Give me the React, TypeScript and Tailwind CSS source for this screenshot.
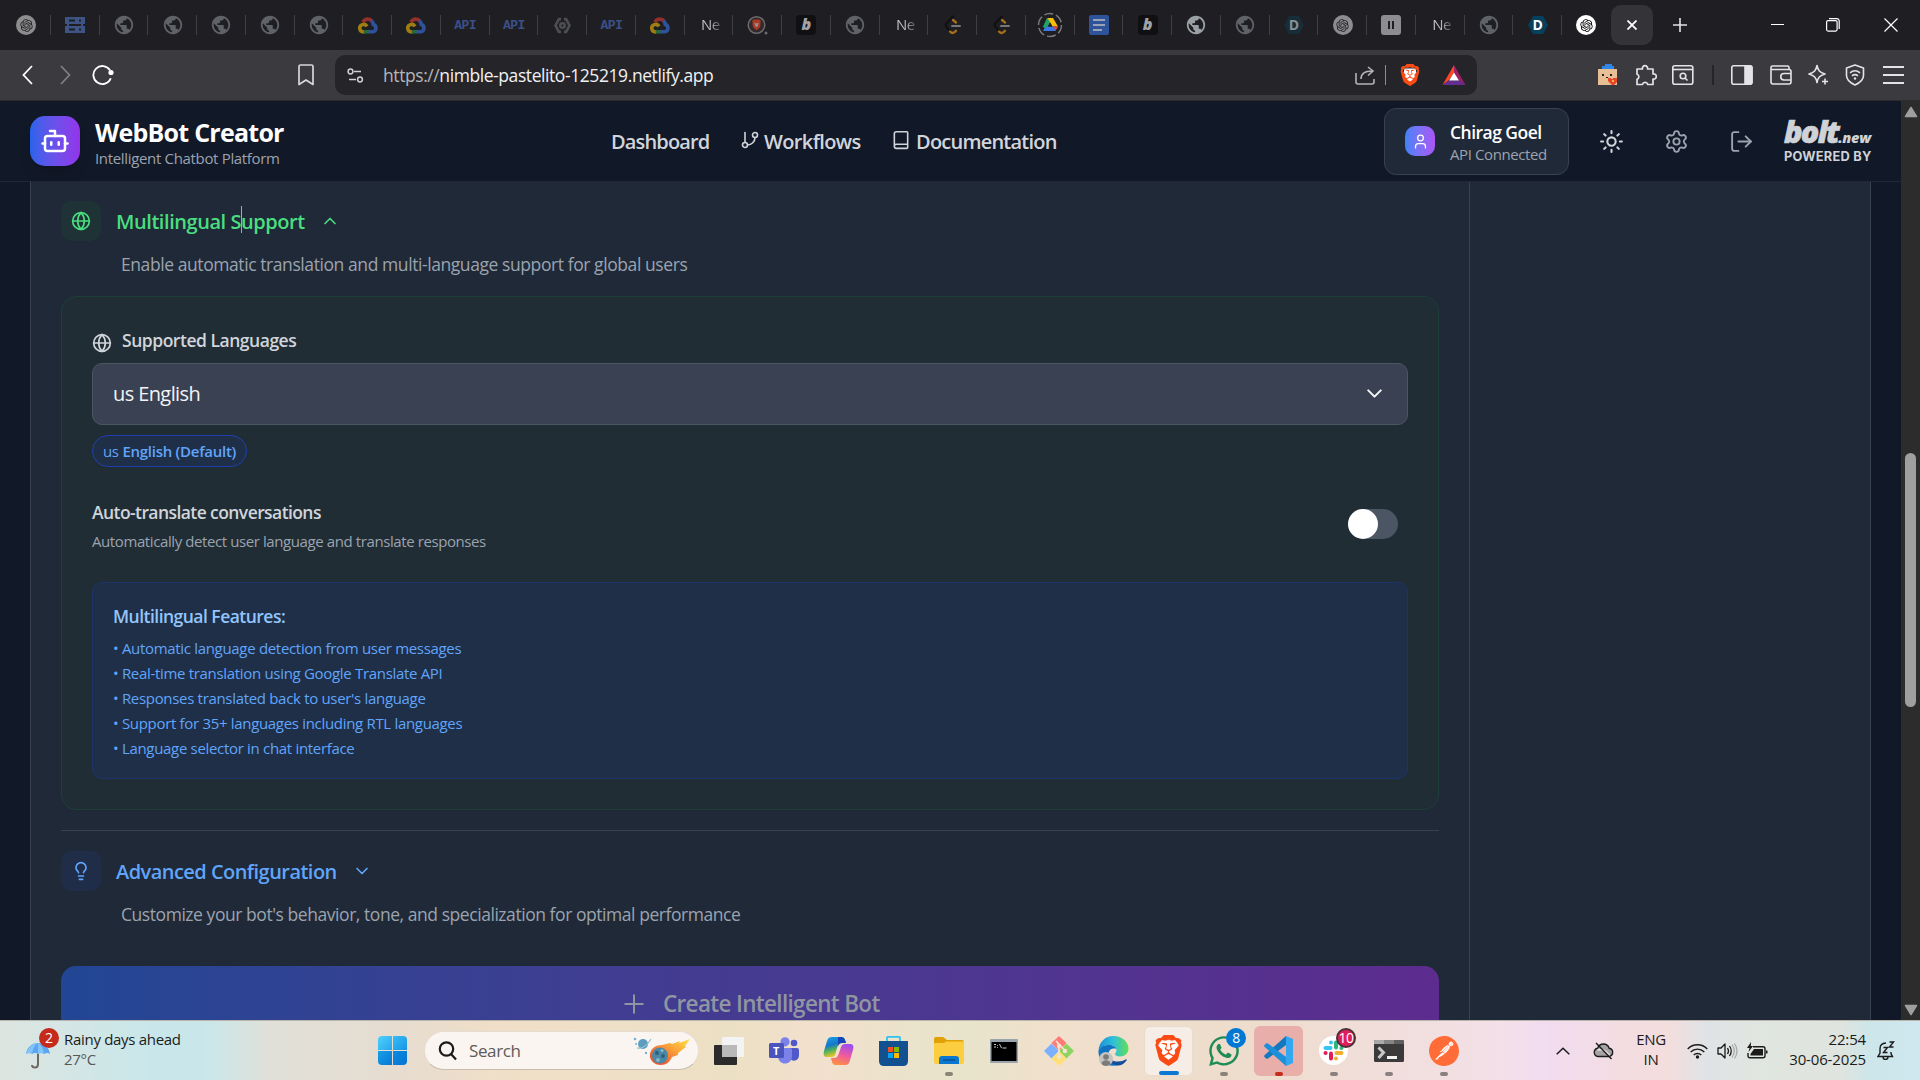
import type { ReactNode } from "react";
import {
  Book,
  Bot,
  ChevronDown,
  ChevronUp,
  GitBranch,
  Globe,
  Lightbulb,
  LogOut,
  Plus,
  Settings,
  Sun,
  User,
} from "lucide-react";
import { FaWhatsapp } from "react-icons/fa";
import { MdPublic } from "react-icons/md";
import { RiOpenaiFill } from "react-icons/ri";
import { SiBrave, SiPostman } from "react-icons/si";

/* ---------- favicons ---------- */

function GptIcon({ bright = false }: { bright?: boolean }) {
  return (
    <span className={`flex size-5 items-center justify-center rounded-full ${bright ? "bg-white text-black" : "bg-[#8d8d8f] text-[#1f1f23]"}`}>
      <RiOpenaiFill size={15} />
    </span>
  );
}

function GlobeIcon({ bright = false }: { bright?: boolean }) {
  return <MdPublic size={22} className={bright ? "text-[#9aa0a6]" : "text-[#5f6367]"} />;
}

function ServerIcon() {
  return (
    <svg width="20" height="18" viewBox="0 0 20 18">
      <path d="M0 1h20v7H0zM0 10h20v7H0z" fill="#3d5484" />
      <path d="M4 3.500h6v2H4zM14 3.500h2v2h-2zM4 12.500h6v2H4zM14 12.500h2v2h-2z" fill="#1f1f23" />
      <path d="M2 8h2v2H2zM16 8h2v2h-2z" fill="#3d5484" />
    </svg>
  );
}

function CloudIcon() {
  return (
    <svg width="20" height="17" viewBox="0 0 20 17" fill="none" strokeWidth="3.600">
      <path d="M5 5.200A5.200 5.200 0 0 1 14 4.300" stroke="#94302b" />
      <path d="M13.300 3.600C15 5 15.200 6.300 15.300 7.500A3.800 3.800 0 0 1 15 14.800H10" stroke="#2e529c" />
      <path d="M10.500 14.800H5.200" stroke="#276a38" />
      <path d="M5.800 14.800A3.700 3.700 0 1 1 8.800 9.500" stroke="#a07d12" />
    </svg>
  );
}

function ApiIcon() {
  return <span className="font-['Liberation_Mono',monospace] text-[13px] leading-none font-bold tracking-[-0.5px] text-[#3b4f88]">API</span>;
}

function HexIcon() {
  return (
    <svg width="17" height="17" viewBox="0 0 18 18" fill="none" stroke="#4d4e51">
      <path d="M7.500 2.200H5.200L1.600 9l3.600 6.800h2.300M10.500 2.200h2.300L16.400 9l-3.600 6.800h-2.300" strokeWidth="2.800" />
      <circle cx="9" cy="9" r="2.400" strokeWidth="2.600" />
    </svg>
  );
}

function NewTabText() {
  return (
    <span className="mb-0.5 bg-gradient-to-r from-[#c8c8ca] from-50% to-[#5a5a5e] bg-clip-text pl-[3px] text-[15px] leading-[22px] tracking-[-0.03em] text-transparent">
      Ne
    </span>
  );
}

function BraveTalkIcon() {
  return (
    <svg width="21" height="21" viewBox="0 0 21 21">
      <circle cx="9.500" cy="10" r="8.300" fill="#33282a" stroke="#6b6b6e" strokeWidth="1.500" />
      <path d="M5.300 5.500 7 4.500h5l1.700 1-.5 6.500L9.500 15.500 5.800 12z" fill="#a83a24" />
      <path d="m7.300 7.500 2.200 1 2.200-1-.8 3.500-1.400 1.200L8.100 11z" fill="#9c8a88" />
      <circle cx="19" cy="18" r="1.500" fill="#6b6b6e" />
    </svg>
  );
}

function BoltIcon() {
  return (
    <span className="flex size-5 items-center justify-center rounded bg-[#101012] pb-0.5 text-[16px] leading-none font-extrabold text-[#a3a3a5] italic">
      b
    </span>
  );
}

function LeetIcon() {
  return (
    <svg width="17" height="20" viewBox="0 0 17 20" fill="none" strokeWidth="2.300" strokeLinecap="round">
      <path d="M9 1.500 2.500 8.200a3 3 0 0 0 0 3.800L6 15.700" stroke="#111113" />
      <path d="M9 5l3 2.500M6 16.500c2 2.300 4 1.800 6-.7" stroke="#a66f1a" />
      <path d="M8 11h8" stroke="#77777a" strokeWidth="2" />
    </svg>
  );
}

function DriveIcon() {
  return (
    <svg width="26" height="26" viewBox="0 0 26 26">
      <circle cx="13" cy="13" r="11.500" fill="none" stroke="#7a7a7e" strokeWidth="1.500" strokeDasharray="9 3" />
      <path d="M10 6h6l-7 12-3-3.500z" fill="#1ea362" />
      <path d="M10.500 6H16l5 8.500h-5.500z" fill="#fbbc04" />
      <path d="M8.500 14.500H21L18 19H6z" fill="#3b78e7" />
      <path d="M16.500 14.500H21L18.500 19z" fill="#ea4335" />
      <path d="M13 10.500l2.300 4h-4.600z" fill="#1f1f23" />
    </svg>
  );
}

function DocsIcon() {
  return (
    <svg width="20" height="20" viewBox="0 0 20 20">
      <rect width="20" height="20" rx="2" fill="#2f539a" />
      <path d="M4 5h12M4 10h12M4 15h9" stroke="#9aa3b5" strokeWidth="2.200" />
    </svg>
  );
}

function DevIcon({ bright = false }: { bright?: boolean }) {
  return (
    <span className="relative flex h-5 w-5 items-center justify-center">
      <svg className="absolute inset-0" width="20" height="20" viewBox="0 0 20 20">
        <path d="M5 1h10l5 9-5 9H5l-5-9z" fill={bright ? "#05405c" : "#162d3a"} />
      </svg>
      <span className={`relative text-[14px] leading-none font-bold ${bright ? "text-white" : "text-[#8b8f93]"}`}>D</span>
    </span>
  );
}

function PauseIcon() {
  return (
    <span className="flex size-5 items-center justify-center gap-0.5 rounded-[3px] bg-[#8d8d8f]">
      <span className="h-2 w-[2px] bg-[#1f1f23]" />
      <span className="h-2 w-[2px] bg-[#1f1f23]" />
    </span>
  );
}

const tabs: ReactNode[] = [
  <GptIcon />, <ServerIcon />, <GlobeIcon />, <GlobeIcon />, <GlobeIcon />, <GlobeIcon />, <GlobeIcon />,
  <CloudIcon />, <CloudIcon />, <ApiIcon />, <ApiIcon />, <HexIcon />, <ApiIcon />, <CloudIcon />,
  <NewTabText />, <BraveTalkIcon />, <BoltIcon />, <GlobeIcon />, <NewTabText />, <LeetIcon />, <LeetIcon />,
  <DriveIcon />, <DocsIcon />, <BoltIcon />, <GlobeIcon bright />, <GlobeIcon />, <DevIcon />, <GptIcon />,
  <PauseIcon />, <NewTabText />, <GlobeIcon />, <DevIcon bright />, <GptIcon bright />,
];

function TabStrip() {
  return (
    <div className="flex h-[50px] items-center bg-[#1f1f23] pl-[2px]">
      {tabs.map((icon, i) => (
        <div key={i} className="relative flex h-5 w-[48.75px] shrink-0 items-center justify-center">
          {icon}
          {i < tabs.length - 1 && <span className="absolute right-0 h-5 w-px bg-[#404044]" />}
        </div>
      ))}
      <div className="flex h-10 w-[42px] items-center justify-center rounded-[10px] bg-[#343438]">
        <svg width="10" height="10" viewBox="0 0 10 10" stroke="#fff" strokeWidth="1.800">
          <path d="m.5.5 9 9M9.500.5l-9 9" />
        </svg>
      </div>
      <svg className="ml-5" width="14" height="14" viewBox="0 0 14 14" stroke="#e4e4e6" strokeWidth="1.600">
        <path d="M7 0v14M0 7h14" />
      </svg>
      <div className="ml-auto flex items-center pr-[22px] text-white">
        <svg width="13" height="13" viewBox="0 0 13 13" stroke="currentColor"><path d="M0 5.500h13" /></svg>
        <svg className="ml-[42px]" width="14" height="14" viewBox="0 0 14 14" fill="none" stroke="currentColor" strokeWidth="1.200">
          <rect x=".6" y="2.600" width="10.500" height="10.500" rx="1.500" />
          <path d="M3 .7h8a2.200 2.200 0 0 1 2.200 2.200v8" />
        </svg>
        <svg className="ml-[44px]" width="14" height="14" viewBox="0 0 14 14" stroke="currentColor" strokeWidth="1.200"><path d="m.5.500 13 13M13.500.5l-13 13" /></svg>
      </div>
    </div>
  );
}

/* ---------- toolbar ---------- */

function BraveLogo({ size }: { size: number }) {
  return (
    <span className="relative flex items-center justify-center">
      <svg className="absolute" width={size} height={size} viewBox="0 0 24 24">
        <path d="M6 5h12l1 5-2 7-5 4-5-4-2-7z" fill="#fff" />
      </svg>
      <SiBrave size={size} className="relative text-[#fb4b14]" />
    </span>
  );
}

function Toolbar() {
  return (
    <div className="flex h-[51px] items-center border-b border-[#2b2b30] bg-[#3b3b3f] text-[#e4e4e6]">
      <svg className="ml-[22px]" width="11" height="20" viewBox="0 0 11 20" fill="none" stroke="#fff" strokeWidth="1.800"><path d="M10 1 1.500 10l8.500 9" /></svg>
      <svg className="ml-[27px]" width="11" height="20" viewBox="0 0 11 20" fill="none" stroke="#828286" strokeWidth="1.700"><path d="m1 1 8.500 9L1 19" /></svg>
      <svg className="ml-[21px]" width="22" height="20" viewBox="0 0 22 20" fill="none" stroke="#fff" strokeWidth="1.800">
        <path d="M18.800 13.200a9 9 0 1 1-.8-8" />
        <circle cx="19" cy="7.500" r="2.600" fill="#fff" stroke="none" />
      </svg>
      <svg className="ml-[184px]" width="16" height="22" viewBox="0 0 16 22" fill="none" stroke="#d8d8da" strokeWidth="1.700">
        <path d="M1 2.500Q1 1 2.500 1h11Q15 1 15 2.500V20.500l-7-4.500-7 4.500z" strokeLinejoin="round" />
      </svg>
      <div className="ml-[21px] flex h-10 w-[1142px] items-center rounded-[10px] bg-[#252529]">
        <svg className="ml-3" width="17" height="15" viewBox="0 0 17 15" fill="none" stroke="#d0d0d2" strokeWidth="1.500">
          <circle cx="3.500" cy="3.500" r="2.400" /><path d="M7 3.500h7M2 11.500h7" /><circle cx="13" cy="11.500" r="2.400" />
        </svg>
        <span className="ml-[19px] w-[340px] text-[17.500px] tracking-[-0.024em] whitespace-nowrap text-[#f1f1f3]">
          <span className="text-[#b5b5b8]">https://</span>nimble-pastelito-125219.netlify.app
        </span>
        <svg className="ml-auto" width="20" height="19" viewBox="0 0 20 19" fill="none" stroke="#b4b4b7" strokeWidth="1.600">
          <path d="M1 7v9q0 2 2 2h14q2 0 2-2v-3M6 13c0-5 3-8 11-8M13 1l5 4-5 4.500" />
        </svg>
        <span className="ml-[10px] h-5 w-px bg-[#8d8d91]" />
        <span className="ml-[13px]"><BraveLogo size={22} /></span>
        <svg className="mr-[11px] ml-[21px]" width="24" height="20" viewBox="0 0 24 20">
          <path d="M12 0v8L6 16l-5.500 4z" fill="#ff4724" />
          <path d="M12 0v8l5.500 8 6 4z" fill="#9e1f63" />
          <path d="M.5 20 6.500 15.500h11L23.500 20z" fill="#662d91" />
          <path d="m12 7.500 5 8H7z" fill="#fff" />
        </svg>
      </div>
      <div className="ml-auto flex items-center pr-[16px]">
        <svg width="20" height="22" viewBox="0 0 20 22">
          <path d="M0 5h19v16H0z" fill="#e8bf94" />
          <path d="M4 2h3V0h7v2h2v3H4z" fill="#2f86e8" />
          <path d="M4 10h2v2H4zM12 10h2v2h-2zM8 13h2v1H8z" fill="#222" />
          <path d="M10 14h3v1h2v-1h4v4l-3 3h-2l-4-4z" fill="#e8432b" />
          <path d="M14 16h2v2h-2z" fill="#f7b62d" />
        </svg>
        <svg className="ml-[17px]" width="22" height="22" viewBox="0 0 22 22" fill="none" stroke="currentColor" strokeWidth="1.700">
          <path d="M2 5h5.500a2.600 2.600 0 1 1 5 0H18v5a2.600 2.600 0 1 1 0 5v5.500h-5.200a2.800 2.800 0 0 0-5.400 0H2v-5.200a2.600 2.600 0 0 0 0-5z" strokeLinejoin="round" />
        </svg>
        <svg className="ml-[15px]" width="22" height="20" viewBox="0 0 22 20" fill="none" stroke="currentColor" strokeWidth="1.600">
          <rect x=".8" y=".8" width="20" height="18.400" rx="2" /><path d="M1 4.500h20" /><circle cx="11" cy="11" r="2.800" /><path d="m13 13 2.500 2.500" />
        </svg>
        <span className="mr-[17px] ml-[18px] h-5 w-[2px] bg-[#252529]" />
        <svg width="22" height="20" viewBox="0 0 22 20" fill="none" stroke="currentColor" strokeWidth="1.600">
          <rect x=".8" y=".8" width="20" height="18.400" rx="2" /><path d="M14 1h5.500q1.500 0 1.500 1.500v15q0 1.500-1.500 1.500H14z" fill="currentColor" />
        </svg>
        <svg className="ml-[17px]" width="22" height="20" viewBox="0 0 22 20" fill="none" stroke="currentColor" strokeWidth="1.600">
          <path d="M19 4.500V2.500Q19 1 17.500 1h-15Q1 1 1 2.500V17q0 2 2 2h16q2 0 2-2V6.500q0-2-2-2H1M21 8.500h-7a3.200 3.200 0 0 0 0 6.500h7" />
        </svg>
        <svg className="ml-[15px]" width="22" height="22" viewBox="0 0 22 22" fill="none" stroke="currentColor" strokeWidth="1.600" strokeLinejoin="round">
          <path d="M10 1.500c1 5 2.500 6.800 8 8.500-5.500 1.700-7 3.500-8 8.500-1-5-2.500-6.800-8-8.500 5.500-1.700 7-3.500 8-8.500z" /><path d="M18 14.500v6M15 17.500h6" />
        </svg>
        <svg className="ml-[16px]" width="20" height="22" viewBox="0 0 20 22" fill="none" stroke="currentColor" strokeWidth="1.600">
          <path d="M10 1 18.500 4v7.500c0 4-3 7-8.500 9.500-5.500-2.500-8.500-5.500-8.500-9.500V4z" strokeLinejoin="round" />
          <path d="M5 8.800c3-2.500 7-2.500 10 0M7 11.800c2-1.500 4-1.500 6 0" /><circle cx="10" cy="14.500" r="1.200" fill="currentColor" stroke="none" />
        </svg>
        <svg className="ml-[18px]" width="21" height="18" viewBox="0 0 21 18" stroke="currentColor" strokeWidth="1.800"><path d="M0 1h21M0 9h21M0 17h21" /></svg>
      </div>
    </div>
  );
}

/* ---------- page ---------- */

function Header() {
  return (
    <header className="flex h-[81px] shrink-0 items-center border-b border-[#1f2937] bg-[#111827]">
      <div className="flex w-[581px] items-center pl-[30px]">
        <div className="flex size-[50px] items-center justify-center rounded-[15px] bg-gradient-to-r from-[#2563eb] to-[#9333ea] text-white shadow-lg">
          <Bot size={30} />
        </div>
        <div className="ml-[15px] pt-[5px] whitespace-nowrap">
          <h1 className="text-[25px] leading-[30px] font-bold tracking-[-0.03em] text-white">WebBot Creator</h1>
          <p className="text-[15px] leading-[23px] tracking-[-0.022em] text-[#9ca3af]">Intelligent Chatbot Platform</p>
        </div>
      </div>
      <nav className="ml-[30px] flex items-center text-[20px] font-semibold whitespace-nowrap text-[#d1d5db]">
        <span className="mt-0.5 w-[129px] tracking-[-0.042em]">Dashboard</span>
        <GitBranch size={20} className="mb-0.5" strokeWidth={1.900} />
        <span className="mt-0.5 ml-[4px] w-[127px] tracking-[-0.032em]">Workflows</span>
        <Book size={20} className="mb-0.5" strokeWidth={1.900} />
        <span className="mt-0.5 ml-[5px] tracking-[-0.039em]">Documentation</span>
      </nav>
      <div className="ml-auto flex items-center pr-[30px]">
        <div className="flex h-[67px] w-[185px] items-center rounded-[12px] border border-[#374151] bg-[#1f2937] pl-5">
          <div className="flex size-[30px] items-center justify-center rounded-[10px] bg-gradient-to-r from-[#3b82f6] to-[#a855f7] text-white">
            <User size={17} strokeWidth={1.800} />
          </div>
          <div className="ml-[15px] pt-[2px] whitespace-nowrap">
            <p className="text-[17.500px] leading-[23px] font-semibold tracking-[-0.03em] text-white">Chirag Goel</p>
            <p className="text-[15px] leading-[20px] tracking-[-0.027em] text-[#9ca3af]">API Connected</p>
          </div>
        </div>
        <Sun size={25} className="ml-[30px] text-[#d1d5db]" />
        <Settings size={25} className="ml-[40px] text-[#9ca3af]" strokeWidth={1.800} />
        <LogOut size={25} className="ml-[40px] text-[#9ca3af]" strokeWidth={1.800} />
        <div className="ml-[30px] w-[87px] whitespace-nowrap text-[#cfd3d8]">
          <div className="flex h-[32px] items-baseline font-extrabold italic">
            <span className="text-[30.500px] leading-[30px] tracking-[-0.055em] [-webkit-text-stroke:0.7px_#cfd3d8]">bolt</span>
            <span className="text-[14.500px] leading-[30px] tracking-[-0.02em]">.new</span>
          </div>
          <p className="font-['Inter',sans-serif] text-[12.800px] leading-[18px] font-bold tracking-[0.018em]">POWERED BY</p>
        </div>
      </div>
    </header>
  );
}

const features = [
  "Automatic language detection from user messages",
  "Real-time translation using Google Translate API",
  "Responses translated back to user's language",
  "Support for 35+ languages including RTL languages",
  "Language selector in chat interface",
];

function MultilingualCard() {
  return (
    <section className="mt-[15px] h-[514px] rounded-[15px] border border-[#1e3e3a] bg-[#202d35] px-[30px] pt-[30px]">
      <div className="flex h-[30px] items-center text-[#d1d5db]">
        <Globe size={20} className="mt-0.5" />
        <span className="mb-[3px] ml-[10px] text-[17.500px] font-semibold tracking-[-0.027em]">Supported Languages</span>
      </div>
      <div className="mt-[6px] flex h-[62px] items-center justify-between rounded-[10px] border border-[#4b5563] bg-[#394152] pr-[20px] pl-5 text-[20px] tracking-[-0.03em] text-[#f3f4f6]">
        us English
        <ChevronDown size={25} className="mb-0.5" />
      </div>
      <div className="mt-[10px] flex h-8 w-[155px] items-center rounded-full border border-[#1e40af] bg-[#1f2f48] pl-[10px] text-[15px] whitespace-nowrap text-[#60a5fa]">
        <span className="tracking-[-0.03em]">us</span>
        <span className="ml-[4px] font-semibold tracking-[-0.018em]">English (Default)</span>
      </div>
      <div className="mt-[28px] flex h-[64px] items-center justify-between pr-[10px]">
        <div className="pb-0.5">
          <p className="text-[17.500px] leading-[29px] font-semibold tracking-[-0.033em] text-[#d1d5db]">Auto-translate conversations</p>
          <p className="text-[15px] leading-[28px] tracking-[-0.027em] text-[#9ca3af]">Automatically detect user language and translate responses</p>
        </div>
        <div className="mb-1.5 h-[30px] w-[50px] rounded-full bg-[#4b5563]">
          <div className="size-[30px] rounded-full bg-white" />
        </div>
      </div>
      <div className="mt-[23px] h-[197px] rounded-[10px] border border-[#1d346b] bg-[#1f2f48] px-5 pt-[18px]">
        <h4 className="text-[17.500px] leading-[30px] font-semibold tracking-[-0.03em] text-[#93c5fd]">Multilingual Features:</h4>
        <ul className="mt-[5px] text-[15px] leading-[25px] tracking-[-0.021em] text-[#60a5fa]">
          {features.map((f) => (
            <li key={f}>• {f}</li>
          ))}
        </ul>
      </div>
    </section>
  );
}

function Page() {
  return (
    <div className="flex w-[1901px] flex-col overflow-hidden bg-[#111827]">
      <Header />
      <main className="ml-[30px] flex h-[838px] w-[1841px] overflow-hidden border-x border-[#374151] bg-[#1f2937]">
        <div className="w-[1439px] shrink-0 border-r border-[#374151] pr-[30px] pl-[30px]">
          <div className="mt-[19px] flex h-10 items-center text-[#4ade80]">
            <div className="flex size-10 items-center justify-center rounded-[10px] bg-[#1f3236]">
              <Globe size={20} />
            </div>
            <span className="relative mt-0.5 ml-[15px] w-[189px] text-[20px] font-semibold tracking-[-0.022em] whitespace-nowrap">
              Multilingual Support
              <span className="absolute -top-px left-[125px] h-[27px] w-px bg-[#4ade80]" />
            </span>
            <ChevronUp size={20} className="ml-[15px]" />
          </div>
          <p className="mt-[9px] ml-[60px] h-[31px] text-[17.500px] leading-[28px] tracking-[-0.024em] text-[#9ca3af]">
            Enable automatic translation and multi-language support for global users
          </p>
          <MultilingualCard />
          <div className="mt-5 h-px bg-[#374151]" />
          <div className="mt-5 flex h-10 items-center text-[#60a5fa]">
            <div className="flex size-10 items-center justify-center rounded-[10px] bg-[#1f2d49]">
              <Lightbulb size={20} />
            </div>
            <span className="mt-0.5 ml-[15px] w-[221px] text-[20px] font-semibold tracking-[-0.027em] whitespace-nowrap">Advanced Configuration</span>
            <ChevronDown size={20} className="ml-[15px]" />
          </div>
          <p className="mt-[9px] ml-[60px] h-[31px] text-[17.500px] leading-[28px] tracking-[-0.0255em] text-[#9ca3af]">
            Customize your bot's behavior, tone, and specialization for optimal performance
          </p>
          <div className="mt-[35px] flex h-[75px] items-center rounded-[15px] bg-gradient-to-r from-[#214694] to-[#5c2c8e] pl-[558px] text-[22.500px] font-semibold text-[#8f95a1]">
            <Plus size={30} strokeWidth={1.600} />
            <span className="ml-[14px] tracking-[-0.03em]">Create Intelligent Bot</span>
          </div>
        </div>
      </main>
    </div>
  );
}

function Scrollbar() {
  return (
    <div className="flex w-[19px] flex-col items-center bg-[#2c2c2c]">
      <svg className="mt-[5px]" width="14" height="12" viewBox="0 0 14 12"><path d="M7 1.500 12.500 10.500h-11z" fill="#9f9f9f" stroke="#9f9f9f" strokeWidth="1.500" strokeLinejoin="round" /></svg>
      <div className="mt-[335px] h-[254px] w-[11px] rounded-full bg-[#9f9f9f]" />
      <svg className="mt-auto mb-[4px]" width="14" height="12" viewBox="0 0 14 12"><path d="M7 10.500 1.500 1.500h11z" fill="#9f9f9f" stroke="#9f9f9f" strokeWidth="1.500" strokeLinejoin="round" /></svg>
    </div>
  );
}

/* ---------- taskbar ---------- */

function CometArt() {
  return (
    <svg width="58" height="30" viewBox="0 0 58 30">
      <defs>
        <linearGradient id="comet" x1="0" y1="1" x2="1" y2="0">
          <stop offset="0.200" stopColor="#ee5a32" />
          <stop offset="0.600" stopColor="#f9a33a" />
          <stop offset="1" stopColor="#ffe24a" />
        </linearGradient>
      </defs>
      <circle cx="10" cy="8" r="5" fill="#5d9dbd" />
      <path d="M4 12c5 1 10-2 14-9" stroke="#8cc1d6" strokeWidth="1.200" fill="none" />
      <circle cx="2" cy="3" r="1.300" fill="#74b4d1" /><circle cx="3" cy="8" r="1" fill="#74b4d1" /><circle cx="13" cy="17" r="1.200" fill="#74b4d1" />
      <path d="M17 18c1-6 6-9 12-9l8-2 2 1 8-3-1 2 11-4-5 7 1 1-8 6 0 2-6 2c-2 5-6 8-11 8-7 0-12-5-11-11z" fill="url(#comet)" />
      <circle cx="27" cy="19.500" r="8" fill="#4a88a6" />
      <circle cx="24" cy="17" r="2" fill="#2f607c" /><circle cx="30" cy="20" r="1.900" fill="#2f607c" /><circle cx="25" cy="24" r="1.900" fill="#84bacb" /><circle cx="29" cy="14.500" r="1.500" fill="#84bacb" />
    </svg>
  );
}

function TaskViewIcon() {
  return (
    <svg width="30" height="28" viewBox="0 0 30 28">
      <rect y="8" width="23" height="20" rx="1" fill="#2b2b2b" />
      <rect x="8" width="22" height="20" rx="1" fill="#f3f3f3" />
      <path d="M8 8h15v12H9q-1 0-1-1z" fill="#b9b9b9" />
    </svg>
  );
}

function TeamsIcon() {
  return (
    <svg width="30" height="27" viewBox="0 0 30 27">
      <circle cx="25" cy="6" r="3.300" fill="#5059c9" />
      <path d="M20 11h8q2 0 2 2v5c0 7-8 7-9 3z" fill="#5059c9" />
      <circle cx="16" cy="4.800" r="4.600" fill="#7b83eb" />
      <path d="M10 11h11q2 0 2 2v6c0 10-14 10-14 0z" fill="#7b83eb" />
      <rect y="6" width="15" height="15" rx="1.500" fill="#4b53bc" />
      <text x="4" y="17.500" fill="#fff" fontSize="11" fontWeight="700">T</text>
    </svg>
  );
}

function CopilotIcon() {
  return (
    <svg width="31" height="28" viewBox="0 0 31 28">
      <defs>
        <linearGradient id="copA" x1="0" y1="0" x2="0.300" y2="1">
          <stop offset="0" stopColor="#1aa5e8" /><stop offset="0.450" stopColor="#1577c9" /><stop offset="0.700" stopColor="#52b258" /><stop offset="1" stopColor="#f1c52a" />
        </linearGradient>
        <linearGradient id="copB" x1="0.600" y1="0" x2="0.300" y2="1">
          <stop offset="0" stopColor="#a04df0" /><stop offset="0.500" stopColor="#ef5a9c" /><stop offset="1" stopColor="#fd9143" />
        </linearGradient>
      </defs>
      <path d="M9 0h9c3 0 4 2 5 6h-4c-3 0-4 2-5 5l-2 7c-1 2-2 2-5 2H4c-3 0-4-2-3-6L4 4c1-3 2-4 5-4z" fill="url(#copA)" />
      <path d="M15 0h3c3 0 4 2 5 6h-4c-2 0-3 1-4 3z" fill="#1746b8" />
      <path d="M22 28h-9c-3 0-4-2-5-7h3c3 0 4-2 5-5l2-6c1-3 3-3 5-3h4c3 0 4 2 3 6l-3 10c-1 4-2 5-5 5z" fill="url(#copB)" />
    </svg>
  );
}

function StoreIcon() {
  return (
    <svg width="29" height="30" viewBox="0 0 29 30">
      <path d="M8 6V2q0-1.200 1.200-1.200h10.600Q21 .8 21 2v4" fill="none" stroke="#2cc3f2" strokeWidth="1.800" />
      <path d="M0 5h29v20q0 5-5 5H5q-5 0-5-5z" fill="#12508f" />
      <path d="M9 11h5v5H9z" fill="#f25022" /><path d="M15 11h5v5h-5z" fill="#7fba00" />
      <path d="M9 17h5v5H9z" fill="#00a4ef" /><path d="M15 17h5v5h-5z" fill="#ffb900" />
    </svg>
  );
}

function FolderIcon() {
  return (
    <svg width="30" height="27" viewBox="0 0 30 27">
      <path d="M0 2q0-2 2-2h7l4 3h15q2 0 2 2v6H0z" fill="#e0a106" />
      <path d="M0 6h9q1.500 0 3-1.500h18V25q0 2-2 2H2q-2 0-2-2z" fill="#fcce3f" />
      <path d="M5 27v-5q0-3 3-3h14q3 0 3 3v5z" fill="#0b78cf" />
      <path d="M9 23h12" stroke="#0a4d8f" strokeWidth="1.300" />
    </svg>
  );
}

function CmdIcon() {
  return (
    <svg width="28" height="24" viewBox="0 0 28 24">
      <rect width="28" height="24" rx="1" fill="#9aa4ad" />
      <path d="M1.500 3h25v19h-25z" fill="#000" />
      <path d="M4 5.500h2M4 8h2M7.500 6v.8M7.500 8v.8M9.500 5l2 4M12.500 9h4" stroke="#dcdcdc" strokeWidth=".9" />
    </svg>
  );
}

function GitIcon() {
  return (
    <svg width="30" height="30" viewBox="0 0 30 30">
      <path d="m15 0 7.500 7-7.500 8-7.500-8z" fill="#ff7b78" />
      <path d="m7.500 7.500 7.500 7.500-7.500 7.500L0 15z" fill="#7db1ff" />
      <path d="m22.500 7.500 7.500 7.500-7.500 7.500L15 15z" fill="#8dd35f" />
      <path d="m15 15 7.500 7.500L15 30l-7.500-7.500z" fill="#ffdf76" />
      <path d="M12 5l9 9.500M15 8.500V21" stroke="#f3e3cf" strokeWidth="1.800" />
      <circle cx="15" cy="10" r="2.200" fill="#f3e3cf" /><circle cx="21" cy="15" r="2.300" fill="#f3e3cf" /><circle cx="15" cy="21" r="2.300" fill="#f3e3cf" />
    </svg>
  );
}

function EdgeIcon() {
  return (
    <svg width="31" height="30" viewBox="0 0 31 30">
      <defs>
        <linearGradient id="edgeTop" x1="0" x2="1"><stop offset="0" stopColor="#1b8fd8" /><stop offset="0.500" stopColor="#2fc0d8" /><stop offset="1" stopColor="#62df54" /></linearGradient>
      </defs>
      <path d="M.5 15C1 6 7 0 15.500 0 24 0 30.500 6 30.500 12.500c0 5-4 8-8.500 8-3 0-5-1-5-2.500 0-1 1.500-1.500 1.500-4 0-3-3-5-7-5C6 9 2 11.500.500 15z" fill="url(#edgeTop)" />
      <path d="M.5 15C2 11 6 9 11 9c4 0 7 2 7.500 4-4-1.500-8 .5-8 5.500 0 6 5 11 11 10.300C10 32.500 0 26 .5 15z" fill="#0f74c4" />
      <path d="M10.500 18c0 5 4 7.500 9 7.500 4 0 6-1 8-2 1-.4 1.500 0 1 1C24 32 11 32 10.500 18z" fill="#124f9c" />
      <circle cx="8" cy="23" r="7" fill="#c3c3c1" /><circle cx="8" cy="21" r="2.800" fill="#7b7b7a" /><path d="M3.500 28c0-5 9-5 9 0-2.500 2.500-6.500 2.500-9 0z" fill="#7b7b7a" />
    </svg>
  );
}

function SlackIcon() {
  return (
    <span className="flex size-[29px] items-center justify-center rounded-full bg-white">
      <svg width="21" height="21" viewBox="0 0 21 21" strokeWidth="4" strokeLinecap="round">
        <path d="M2.500 8h5" stroke="#36c5f0" /><path d="M8 2.500v.1" stroke="#36c5f0" />
        <path d="M13 2.500v5" stroke="#2eb67d" /><path d="M18.500 8h-.1" stroke="#2eb67d" />
        <path d="M13.500 13h5" stroke="#ecb22e" /><path d="M13 18.500v-.1" stroke="#ecb22e" />
        <path d="M8 13.500v5" stroke="#e01e5a" /><path d="M2.500 13h.1" stroke="#e01e5a" />
      </svg>
    </span>
  );
}

function TerminalIcon() {
  return (
    <svg width="30" height="22" viewBox="0 0 30 22">
      <rect width="30" height="22" rx="1.500" fill="#3a3a3a" />
      <path d="M0 4V1.500Q0 0 1.500 0H10v4z" fill="#a9a9a9" /><path d="M10 0h10v4H10z" fill="#858585" /><path d="M20 0h8.500Q30 0 30 1.500V4H20z" fill="#5f5f5f" />
      <path d="m4.500 7.500 5 5-5 5.500" stroke="#c8c8c8" strokeWidth="3" fill="none" /><path d="M13 17.500h10" stroke="#f2f2f2" strokeWidth="3" />
    </svg>
  );
}

function VsCodeIcon() {
  return (
    <svg width="30" height="30" viewBox="0 0 30 30">
      <path d="m22 0 7 3v24l-7 3z" fill="#35a7f0" />
      <path d="M22 0v9L4 22.500q-1 .7-2 0L.5 21q-.8-1 0-1.800z" fill="#1577bd" />
      <path d="M22 30v-9L4 7.500q-1-.7-2 0L.5 9q-.8 1 0 1.800z" fill="#1e8fd9" />
    </svg>
  );
}

type TaskItem = { id: string; icon: ReactNode; mark?: string; badge?: string; badgeClass?: string; tile?: string };

const items: TaskItem[] = [
  { id: "taskview", icon: <TaskViewIcon /> },
  { id: "teams", icon: <TeamsIcon /> },
  { id: "copilot", icon: <CopilotIcon /> },
  { id: "store", icon: <StoreIcon /> },
  { id: "explorer", icon: <FolderIcon />, mark: "w-2 bg-[#8b8578]" },
  { id: "cmd", icon: <CmdIcon /> },
  { id: "git", icon: <GitIcon /> },
  { id: "edge", icon: <EdgeIcon /> },
  { id: "brave", icon: <BraveLogo size={31} />, mark: "w-5 bg-[#0b78d4]", tile: "bg-[#f6ede6] border border-[#e8dccf]" },
  { id: "whatsapp", icon: <FaWhatsapp size={34} className="text-[#1f8c56]" />, mark: "w-2 bg-[#8b8578]", badge: "8", badgeClass: "bg-[#0078d4] top-[3px] right-[4px]" },
  { id: "vscode", icon: <VsCodeIcon />, mark: "w-2 bg-[#c42b1c]", tile: "bg-[#e8aeaa]" },
  { id: "slack", icon: <SlackIcon />, mark: "w-2 bg-[#8b8080]", badge: "10", badgeClass: "bg-[#e01e5a] border-2 border-[#4a3038] top-[3px] right-[4px]" },
  { id: "terminal", icon: <TerminalIcon />, mark: "w-2 bg-[#8b8080]" },
  { id: "postman", icon: <span className="rounded-full bg-white"><SiPostman size={30} className="text-[#ff6c37]" /></span>, mark: "w-2 bg-[#8b8080]" },
];

function Tray() {
  return (
    <div className="ml-auto flex items-center pr-[25px] text-[15px] text-[#1b1b1b]">
      <svg width="14" height="8" viewBox="0 0 14 8" fill="none" stroke="currentColor" strokeWidth="1.500"><path d="m.7 7.300 6.300-6 6.300 6" /></svg>
      <svg className="ml-[23px]" width="21" height="18" viewBox="0 0 21 18" fill="none" stroke="currentColor" strokeWidth="1.400">
        <path d="M5 14.500a4.200 4.200 0 0 1-.3-8.300 6 6 0 0 1 11.400 0 4.200 4.200 0 0 1 0 8.300z" fill="#a6a3a5" />
        <path d="M4.500 8q6-2 12 5.500" stroke="#e4e0e2" strokeWidth="2" /><path d="m3 1 15.500 16" />
      </svg>
      <div className="mb-[3px] ml-[22px] w-[30px] text-center leading-[20px] tracking-[-0.02em]">
        <p>ENG</p>
        <p>IN</p>
      </div>
      <svg className="ml-[21px]" width="21" height="16" viewBox="0 0 21 16" fill="none" stroke="currentColor" strokeWidth="1.400">
        <path d="M.7 6a13.500 13.500 0 0 1 19.600 0M3.700 9a9.500 9.500 0 0 1 13.600 0M6.700 12a5.400 5.400 0 0 1 7.600 0" /><circle cx="10.500" cy="14" r="1.700" fill="currentColor" stroke="none" />
      </svg>
      <svg className="ml-[9px]" width="21" height="16" viewBox="0 0 21 16" fill="none" stroke="currentColor" strokeWidth="1.300">
        <path d="M1 5h3l4-4v14l-4-4H1z" strokeLinejoin="round" /><path d="M10.500 5q2 3 0 6M12.500 3q3.500 5 0 10" /><path d="M15 1.500q4.500 6.500 0 13M17.500.5q5 7.500 0 15" stroke="#a8aba9" />
      </svg>
      <svg className="ml-[9px]" width="21" height="17" viewBox="0 0 21 17" fill="none" stroke="currentColor" strokeWidth="1.400">
        <path d="M6 4.700h10q2 0 2 2v7q0 2-2 2H3q-2 0-2-2V11" /><path d="M7 7h9v6.500H3.500V12z" fill="currentColor" stroke="none" /><path d="M4 0 0 6h2.500L1.500 10 6 4H3.800z" fill="currentColor" stroke="none" /><path d="M19 8.500h1.500v3H19z" fill="currentColor" stroke="none" />
      </svg>
      <div className="mb-[3px] ml-[18px] w-[80px] text-right leading-[20px] tracking-[-0.01em] whitespace-nowrap">
        <p>22:54</p>
        <p>30-06-2025</p>
      </div>
      <svg className="ml-[11px]" width="18" height="19" viewBox="0 0 18 19" fill="none" stroke="currentColor" strokeWidth="1.400">
        <path d="M9 2C4.500 2 3 5 3 8v4l-2 3.500h14.500L14 12.500V11M6 16a2.500 2.500 0 0 0 5 0M6.500 6.500h4l-4 5h4M12.500 1h4l-4 5h4" />
      </svg>
    </div>
  );
}

function Taskbar() {
  return (
    <div className="flex h-[60px] items-center border-t border-[#b9b5ad] bg-[linear-gradient(90deg,#dde5e0_0px,#c9e7ea_150px,#c9e7ea_205px,#e0e0d8_270px,#e6dccf_400px,#f0dfc8_500px,#ece0c4_730px,#f2e0cd_810px,#e8e4cb_960px,#f1e0cc_1060px,#eedccc_1250px,#f3e0e8_1500px,#f1dcf0_1545px,#f3dde2_1620px,#f3dddd_1670px,#e0e3e6_1705px,#e0e6df_1770px,#dfe4de_1840px,#cde6ea_1870px,#cfe7ef_1920px)]">
      <div className="flex w-[378px] items-center">
        <div className="relative ml-[26px] flex h-[52px] w-[33px] items-center">
          <svg className="mt-2" width="25" height="29" viewBox="0 0 25 29">
            <path d="M12 14v10q0 3.500-3 3.500T6 25" fill="none" stroke="#6f6763" strokeWidth="2" />
            <path d="M0 14C1 7 6 3 12 3s11 4 12 11q-3-2-6 0-3-2-6 0-3-2-6 0-3-2-6 0z" fill="#5aa7ef" />
            <path d="M6 14q1-8 6-11-9 1-12 11 3-2 6 0zM12 14q3-2 6 0-1-8-6-11z" fill="#83c3f9" />
          </svg>
          <span className="absolute top-[3px] left-[13px] flex size-5 items-center justify-center rounded-full bg-[#c42b1c] text-[14px] leading-none text-white">2</span>
        </div>
        <div className="mb-[3px] ml-[5px] text-[15px] leading-[20px] tracking-[-0.02em] whitespace-nowrap">
          <p className="text-[#1b1b1b]">Rainy days ahead</p>
          <p className="text-[#575757]">27°C</p>
        </div>
      </div>
      <div className="grid size-[29px] grid-cols-2 gap-px">
        <span className="rounded-tl-sm bg-gradient-to-br from-[#4fd0fb] to-[#23a8ec]" />
        <span className="rounded-tr-sm bg-gradient-to-br from-[#36bdf5] to-[#1795e4]" />
        <span className="rounded-bl-sm bg-gradient-to-br from-[#1a9fe8] to-[#0578d4]" />
        <span className="rounded-br-sm bg-gradient-to-br from-[#108be0] to-[#0573d0]" />
      </div>
      <div className="ml-[17px] flex h-[39px] w-[275px] items-center rounded-full border border-b-[#c9bcac] border-[#e6dccf] bg-[#faf5f0]">
        <svg className="ml-[13px]" width="19" height="20" viewBox="0 0 19 20" fill="none" stroke="#1b1b1b" strokeWidth="2.200"><circle cx="8.500" cy="8" r="6.700" /><path d="m13 13 5 5.500" /></svg>
        <span className="ml-[12px] text-[17px] tracking-[-0.022em] text-[#5e5b58]">Search</span>
        <span className="mr-[7px] ml-auto"><CometArt /></span>
      </div>
      <div className="ml-[2px] flex">
        {items.map((item) => (
          <div key={item.id} className="flex w-[55px] justify-center">
            <div className={`relative flex h-[50px] w-[49px] items-center justify-center rounded-md ${item.tile ?? ""}`}>
              {item.icon}
              {item.badge && (
                <span className={`absolute flex size-5 -translate-y-px translate-x-0.5 items-center justify-center rounded-full text-[14px] leading-none tracking-[-0.04em] text-white ${item.badgeClass}`}>
                  {item.badge}
                </span>
              )}
              {item.mark && <span className={`absolute bottom-0 h-[4px] rounded-full ${item.mark}`} />}
            </div>
          </div>
        ))}
      </div>
      <Tray />
    </div>
  );
}

export default function App() {
  return (
    <div className="flex h-[1080px] w-[1920px] flex-col overflow-hidden bg-[#111827] font-['Open_Sans','Noto_Sans',sans-serif]">
      <TabStrip />
      <Toolbar />
      <div className="flex h-[919px]">
        <Page />
        <Scrollbar />
      </div>
      <Taskbar />
    </div>
  );
}
